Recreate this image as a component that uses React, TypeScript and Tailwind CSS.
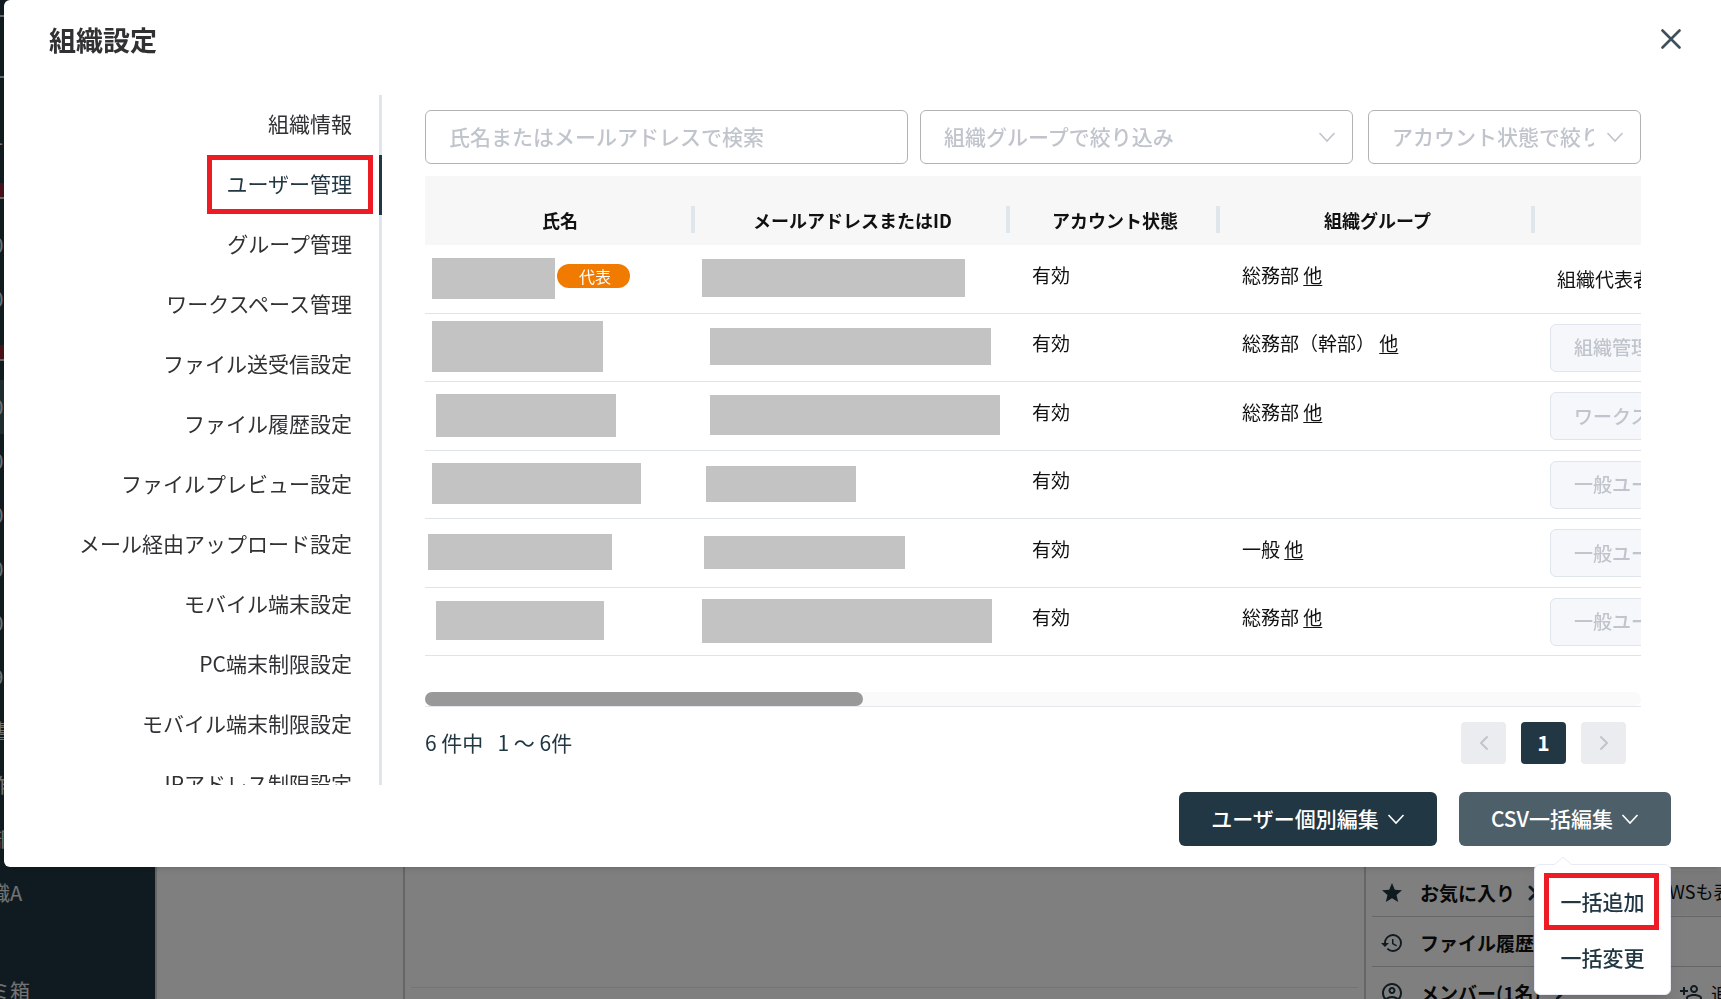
import React, { useState } from "react";
import { ChevronLeft, ChevronRight } from "lucide-react";
import { MdHistory, MdOutlineAccountCircle, MdOutlinePersonAddAlt, MdStar } from "react-icons/md";

const settings = [
  "組織情報",
  "ユーザー管理",
  "グループ管理",
  "ワークスペース管理",
  "ファイル送受信設定",
  "ファイル履歴設定",
  "ファイルプレビュー設定",
  "メール経由アップロード設定",
  "モバイル端末設定",
  "PC端末制限設定",
  "モバイル端末制限設定",
  "IPアドレス制限設定",
];

const columns = [
  { label: "氏名", width: "w-[270px]" },
  { label: "メールアドレスまたはID", width: "w-[315px]" },
  { label: "アカウント状態", width: "w-[210px]" },
  { label: "組織グループ", width: "w-[315px]" },
  { label: "権限", width: "w-[420px]" },
];

// name / mail are masked, so only the size of the mask is kept
const users = [
  { name: "ml-[7px] w-[123px] h-[41px]", mail: "ml-[7px] w-[263px] h-[38px]", owner: true, group: "総務部", role: "組織代表者" },
  { name: "ml-[7px] w-[171px] h-[51px]", mail: "ml-[15px] w-[281px] h-[37px]", group: "総務部（幹部）", role: "組織管理者" },
  { name: "ml-[11px] w-[180px] h-[43px]", mail: "ml-[15px] w-[290px] h-[40px]", group: "総務部", role: "ワークスペース管理者" },
  { name: "ml-[7px] w-[209px] h-[41px]", mail: "ml-[11px] w-[150px] h-[36px]", group: "", role: "一般ユーザー" },
  { name: "ml-[3px] w-[184px] h-[36px]", mail: "ml-[9px] w-[201px] h-[33px]", group: "一般", role: "一般ユーザー" },
  { name: "ml-[11px] w-[168px] h-[39px]", mail: "ml-[7px] w-[290px] h-[44px]", group: "総務部", role: "一般ユーザー" },
];

const workspaces = [
  "001", "", "100", "100", "", "100", "100", "100", "100", "100", "109", "文書", "製作", "本部", "組織A",
];

function Backdrop() {
  return (
    <div className="flex h-screen bg-white">
      <aside className="flex w-[155px] shrink-0 flex-col overflow-hidden bg-[#213743] text-xl text-[#e6e6e6]">
        <div className="h-[15px] shrink-0" />
        <div className="h-[61px] shrink-0 border-t-2 border-[#cfcfcf]" />
        <div className="h-[34px] shrink-0 border-t-2 border-[#cfcfcf]" />
        <ul className="grow">
          {workspaces.map((name, i) => (
            <li key={i} className={`flex h-[54px] items-center ${i === 5 ? "bg-[#3a5a60]" : ""}`}>
              {name ? (
                <span className="-ml-[30px] whitespace-nowrap">{name}</span>
              ) : (
                <span className="h-4 w-1 border-b-2 border-[#cfcfcf] bg-[#8f2330]" />
              )}
            </li>
          ))}
        </ul>
        <div className="h-6 shrink-0">
          <span className="-ml-[30px] block whitespace-nowrap leading-8">ゴミ箱</span>
        </div>
      </aside>
      <div className="w-[250px] shrink-0 border-x-2 border-[#cccccc]" />
      <main className="flex grow flex-col justify-end px-1.5">
        <div className="h-3 border-t border-[#e8e8e8]" />
      </main>
      <section className="flex w-[357px] shrink-0 flex-col justify-end overflow-hidden border-l-2 border-[#cccccc] pl-1.5 text-[19px] font-bold text-[#111]">
        <div className="flex h-[50px] items-center justify-between border-b border-[#cccccc] pl-2 pt-[3px]">
          <span className="flex items-center gap-4">
            <MdStar className="size-6 text-[#213743]" />
            <span className="flex items-center gap-1.5">
              お気に入り
              <ChevronRight size={24} strokeWidth={3} className="text-[#213743]" />
            </span>
          </span>
          <span className="h-11 w-[52px] overflow-hidden whitespace-nowrap bg-[#f4f4f4] text-lg font-normal leading-10">WSも表示</span>
        </div>
        <div className="flex h-[50px] items-center gap-4 border-b border-[#cccccc] pl-2 pt-[3px]">
          <MdHistory className="size-6 text-[#213743]" />
          ファイル履歴
        </div>
        <div className="flex h-8 items-start justify-between pl-2 pt-3">
          <span className="flex items-center gap-4">
            <MdOutlineAccountCircle className="size-6 text-[#213743]" />
            <span className="flex items-center gap-2">
              メンバー(1名)
              <ChevronRight size={22} strokeWidth={3} className="text-[#213743]" />
            </span>
          </span>
          <span className="flex w-[42px] items-center gap-2 overflow-hidden whitespace-nowrap text-lg font-normal">
            <MdOutlinePersonAddAlt className="size-6 shrink-0 -scale-x-100 text-[#213743]" />
            追加
          </span>
        </div>
      </section>
    </div>
  );
}

function Filters() {
  return (
    <div className="mb-3 flex text-[21px] font-medium">
      <input
        type="text"
        aria-label="氏名またはメールアドレスで検索"
        placeholder="氏名またはメールアドレスで検索"
        className="mr-3 h-[54px] min-w-0 flex-1 rounded-md border border-[#b3b3b3] px-[23px] pb-0.5 placeholder:text-[#c0c4cc]"
      />
      <div className="relative mr-[15px] w-[433px]">
        <select
          aria-label="組織グループで絞り込み"
          className="h-[54px] w-full appearance-none rounded-md border border-[#b3b3b3] bg-white pl-[23px] pr-[46px] text-[#c0c4cc]"
        >
          <option>組織グループで絞り込み</option>
        </select>
        <Caret className="absolute right-[17px] top-[18px] text-[#c0c4cc]" />
      </div>
      <div className="relative w-[273px]">
        <select
          aria-label="アカウント状態で絞り込み"
          className="h-[54px] w-full appearance-none rounded-md border border-[#b3b3b3] bg-white pl-[23px] pr-[46px] text-[#c0c4cc]"
        >
          <option>アカウント状態で絞り込み</option>
        </select>
        <Caret className="absolute right-[17px] top-[18px] text-[#c0c4cc]" />
      </div>
    </div>
  );
}

function Caret({ className = "" }: { className?: string }) {
  return (
    <svg viewBox="0 0 18 18" className={`pointer-events-none size-[18px] ${className}`} fill="none" stroke="currentColor" strokeWidth="1.6">
      <path d="M1.5 5 L9 13 L16.5 5" />
    </svg>
  );
}

function UserTable() {
  return (
    <div className="overflow-hidden">
      <table className="w-[1530px] table-fixed border-separate border-spacing-0 text-[19px] text-[#111]">
        <thead>
          <tr className="h-[69px] bg-[#f7f7f7]">
            {columns.map((col) => (
              <th key={col.label} className={`${col.width} p-0 pt-[18px] text-lg font-bold`}>
                <div className="flex h-[27px] items-center border-r-4 border-[#dfe6ec] pl-1">
                  <span className="w-full text-center">{col.label}</span>
                </div>
              </th>
            ))}
          </tr>
        </thead>
        <tbody>
          {users.map((user, i) => (
            <tr key={i} className="odd:h-[69px] even:h-[68px] [&>td]:border-b [&>td]:border-[#dfe4ea]">
              <td className="p-0 pb-0.5">
                <div className="flex items-center gap-0.5">
                  <span className={`block bg-[#c3c3c3] ${user.name}`} />
                  {user.owner && (
                    <span className="mb-1 h-6 w-[73px] rounded-full bg-[#f07b00] pl-[22px] text-base leading-6 text-white">代表</span>
                  )}
                </div>
              </td>
              <td className="p-0 pb-0.5">
                <span className={`block bg-[#c3c3c3] ${user.mail}`} />
              </td>
              <td className="p-0 pb-2 pl-[22px]">有効</td>
              <td className="p-0 pb-2 pl-[22px]">
                {user.group && (
                  <>
                    {user.group} <a href="#group" className="underline underline-offset-2">他</a>
                  </>
                )}
              </td>
              <td className="p-0 pl-[15px]">
                {user.owner ? (
                  <span className="pl-[7px]">{user.role}</span>
                ) : (
                  <select
                    disabled
                    aria-label="権限"
                    className="block h-12 w-[380px] appearance-none rounded-md border border-[#dfe4ed] bg-[#f5f7fa] px-[23px] font-medium text-[#c0c4cc] opacity-100"
                  >
                    <option>{user.role}</option>
                  </select>
                )}
              </td>
            </tr>
          ))}
        </tbody>
      </table>
      <div className="mt-9 border-b border-[#e4e7ed]">
        <div className="rounded-full bg-[#fafafa]">
          <div className="h-3.5 w-[36%] rounded-full bg-[#999999]" />
        </div>
      </div>
    </div>
  );
}

function Pagination() {
  return (
    <div className="mt-[15px] flex items-center justify-between pr-[15px] text-[21px] text-[#213743]">
      <p className="whitespace-pre">6 件中   1 〜 6件</p>
      <div className="flex gap-[15px]">
        <button aria-label="前へ" className="flex h-[42px] w-[45px] items-center justify-center rounded-sm bg-[#ebecef] text-[#c0c4cc]">
          <ChevronLeft size={24} />
        </button>
        <button className="h-[42px] w-[45px] rounded-sm bg-[#213743] font-bold text-white">1</button>
        <button aria-label="次へ" className="flex h-[42px] w-[45px] items-center justify-center rounded-sm bg-[#ebecef] text-[#c0c4cc]">
          <ChevronRight size={24} />
        </button>
      </div>
    </div>
  );
}

function CsvMenu() {
  return (
    <div className="absolute right-0 top-[72px] w-[137px] rounded-md border border-[#e8ebf5] bg-white py-2 shadow-lg">
      <svg viewBox="0 0 18 10" className="absolute -top-[9px] left-[19px] h-2.5 w-[18px]">
        <path d="M0 9 L9 1 L18 9 V10 H0 Z" fill="#fff" />
        <path d="M0 9 L9 1 L18 9" fill="none" stroke="#e8ebf5" />
      </svg>
      <button className="relative block h-[57px] w-full text-center text-[21px] text-[#213743]">
        一括追加
        <span className="absolute inset-y-0 left-[9px] right-[11px] border-[5px] border-[#ed1c24]" />
      </button>
      <button className="block h-14 w-full text-center text-[21px] text-[#213743]">一括変更</button>
    </div>
  );
}

export default function App() {
  const [active, setActive] = useState("ユーザー管理");
  const [csvOpen, setCsvOpen] = useState(true);

  return (
    <div className="h-screen overflow-hidden font-['Noto_Sans_CJK_JP',sans-serif]">
      <Backdrop />

      <div className="fixed inset-0 flex items-start bg-black/50">
        <div role="dialog" aria-label="組織設定" className="ml-1 min-w-0 flex-1 rounded-l-md bg-white shadow-md">
          <header className="flex h-[95px] items-start justify-between pl-[45px] pr-10 pt-[19px]">
            <h1 className="text-[27px] font-bold leading-[42px] text-[#303133]">組織設定</h1>
            <button aria-label="閉じる" className="mt-[10px]">
              <svg viewBox="0 0 20 20" className="size-5" fill="none" stroke="#3d505c" strokeWidth="2.6" strokeLinecap="round">
                <path d="M1.5 1.5 L18.5 18.5 M18.5 1.5 L1.5 18.5" />
              </svg>
            </button>
          </header>

          <div className="flex h-[690px]">
            <nav className="w-[378px] shrink-0 overflow-hidden">
              {settings.map((label) => (
                <a
                  key={label}
                  href="#settings"
                  onClick={() => setActive(label)}
                  className={`relative flex h-[60px] items-center justify-end border-r-[3px] pb-0.5 pr-[27px] text-[21px] ${
                    label === active ? "border-[#213743] text-[#213743]" : "border-[#dfe4ed] text-[#303133]"
                  }`}
                >
                  {label}
                  {label === active && (
                    <span className="absolute right-1.5 top-0 h-[59px] w-[166px] border-[5px] border-[#ed1c24]" />
                  )}
                </a>
              ))}
            </nav>
            <div className="min-w-0 flex-1 pl-[43px] pr-20 pt-[15px]">
              <Filters />
              <UserTable />
              <Pagination />
            </div>
          </div>

          <footer className="flex justify-end gap-[22px] pb-[21px] pr-[50px] pt-[7px] text-[21px] font-medium text-white">
            <button className="flex h-[54px] w-[258px] items-center justify-center gap-2 rounded-md bg-[#213743] pb-px">
              ユーザー個別編集
              <Caret />
            </button>
            <div className="relative">
              <button
                onClick={() => setCsvOpen(!csvOpen)}
                className="flex h-[54px] w-[212px] items-center justify-center gap-2 rounded-md bg-[#4d5f69] pb-px"
              >
                CSV一括編集
                <Caret />
              </button>
              {csvOpen && <CsvMenu />}
            </div>
          </footer>
        </div>
      </div>
    </div>
  );
}
